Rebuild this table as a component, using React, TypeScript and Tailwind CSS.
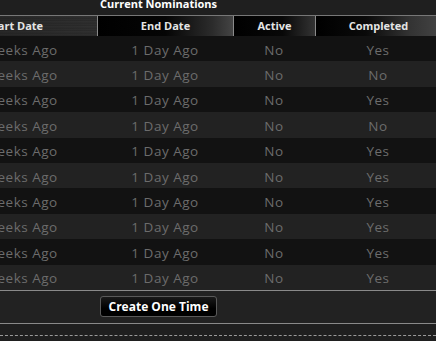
import React from 'react';

const rows = [
  { start: '2 Weeks Ago', end: '1 Day Ago', active: 'No', completed: 'Yes' },
  { start: '2 Weeks Ago', end: '1 Day Ago', active: 'No', completed: 'No' },
  { start: '2 Weeks Ago', end: '1 Day Ago', active: 'No', completed: 'Yes' },
  { start: '2 Weeks Ago', end: '1 Day Ago', active: 'No', completed: 'No' },
  { start: '2 Weeks Ago', end: '1 Day Ago', active: 'No', completed: 'Yes' },
  { start: '2 Weeks Ago', end: '1 Day Ago', active: 'No', completed: 'Yes' },
  { start: '2 Weeks Ago', end: '1 Day Ago', active: 'No', completed: 'Yes' },
  { start: '2 Weeks Ago', end: '1 Day Ago', active: 'No', completed: 'Yes' },
  { start: '2 Weeks Ago', end: '1 Day Ago', active: 'No', completed: 'Yes' },
  { start: '2 Weeks Ago', end: '1 Day Ago', active: 'No', completed: 'Yes' },
];

// brushed metal look for the header strip
const metal =
  'bg-[repeating-linear-gradient(180deg,#444_0px,#555_1px,#3b3b3b_2px,#4d4d4d_3px,#404040_5px),linear-gradient(90deg,#3a3a3a,#505050)] bg-blend-overlay';

export default function App() {
  return (
    <div className="w-[436px] h-[341px] overflow-hidden bg-[#1f1f1f] font-['Open_Sans',sans-serif]">
      {/* Title */}
      <div className="h-[15px] pl-[100px] flex items-end">
        <span className="text-[11px] leading-[14px] font-bold text-white mb-[4px]">Current Nominations</span>
      </div>

      <div className="ml-[-67px] w-[508px]">
        {/* Header */}
        <div className="grid grid-cols-[164px_136px_82px_126px] h-[21px] border-t border-[#777] bg-[#111] text-[11px] font-bold text-[#e4e4e4]">
          <div className={`flex items-center justify-center ${metal}`}>Start Date</div>
          <div className="flex items-center justify-center border-l border-[#8a8a8a] bg-[linear-gradient(90deg,#000_0%,#050505_50%,#2c2c2c_85%,#444_100%)]">End Date</div>
          <div className="flex items-center justify-center border-l border-[#8a8a8a] bg-[linear-gradient(90deg,#000_0%,#080808_60%,#333_100%)]">Active</div>
          <div className="flex items-center justify-center border-l border-[#8a8a8a] bg-[linear-gradient(90deg,#000_0%,#0a0a0a_40%,#333_75%,#444_100%)]">Completed</div>
        </div>

        {/* Rows */}
        {rows.map((r, i) => (
          <div
            key={i}
            className={`grid grid-cols-[164px_136px_82px_126px] h-[25.4px] pt-[2px] items-center text-[13.5px] tracking-[0.5px] text-[#6c6c6c] ${
              i % 2 === 0 ? 'bg-[#121212]' : 'bg-[#222222]'
            }`}
          >
            <div className="text-center">{r.start}</div>
            <div className="text-center">{r.end}</div>
            <div className="text-center">{r.active}</div>
            <div className="text-center">{r.completed}</div>
          </div>
        ))}
      </div>

      {/* Button bar */}
      <div className="h-[34px] border-t border-b border-[#8a8a8a] bg-[#222] flex items-center pl-[100px]">
        <button className="h-[21px] w-[117px] rounded-[3px] border border-[#5a5a5a] bg-[linear-gradient(180deg,#1a1a1a,#000_60%)] text-[12px] font-bold text-white leading-none">
          Create One Time
        </button>
      </div>

      <div className="h-[11px]" />
      <div className="border-t border-dashed border-[#9a9a9a]" />
      <div className="pl-[70px] pt-[5px] text-[12px] text-[#999] leading-[14px]">
        You have no pending nominations at this time. All nominations are listed above.
      </div>
    </div>
  );
}
